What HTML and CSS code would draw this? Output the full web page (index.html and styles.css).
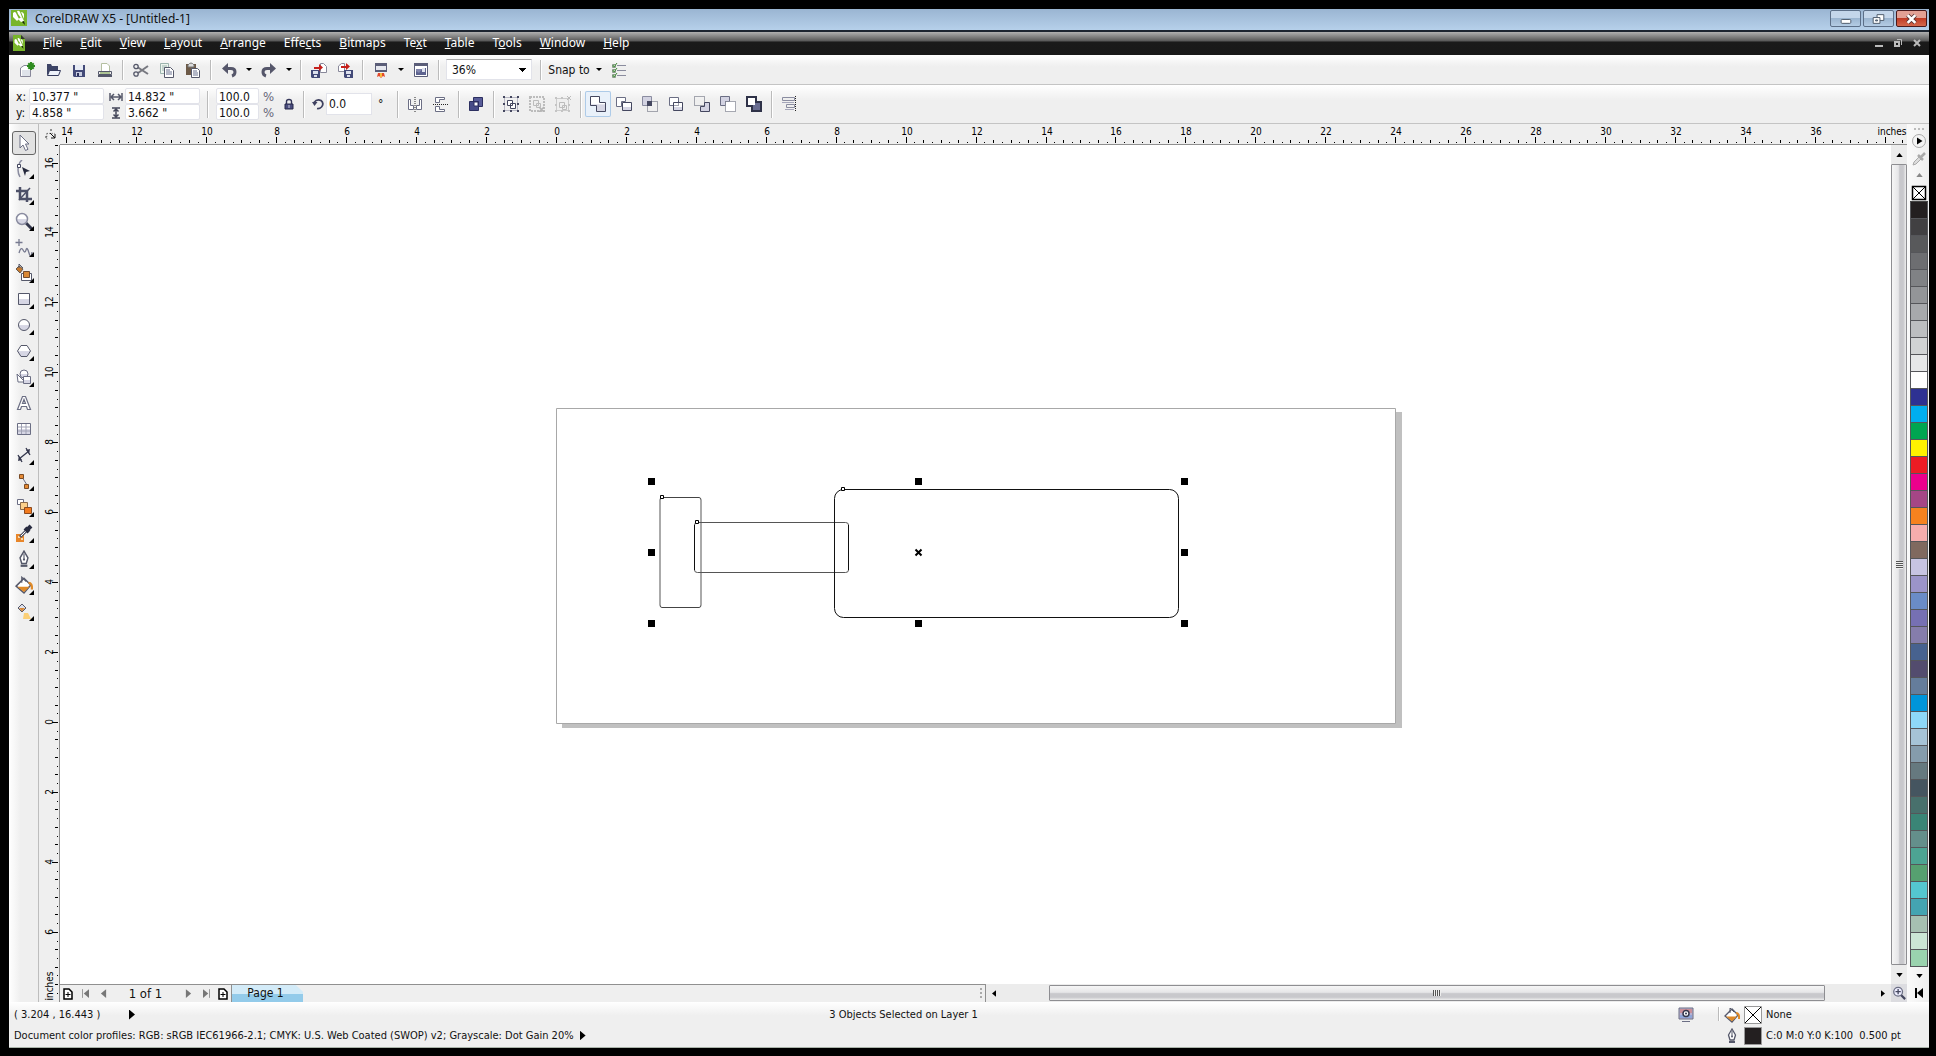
FILE: index.html
```html
<!DOCTYPE html>
<html lang="en">
<head>
<meta charset="utf-8">
<title>CorelDRAW X5 - [Untitled-1]</title>
<link rel="stylesheet" href="styles.css">
</head>
<body>
<svg class="defs" aria-hidden="true">
  <defs>
    <linearGradient id="glass" x1="0" y1="0" x2="0" y2="1"><stop offset=".5" stop-color="#fff"/><stop offset=".55" stop-color="#d6d6e4"/></linearGradient>
    <symbol id="i-bucket" viewBox="0 0 16 16"><path d="M1 9 8 2l6 6-6 7z" fill="#fff" stroke="#55586a" stroke-width="1.3"/><path d="M2 9.500h11L8 14.300z" fill="#e08a28"/><path d="M6 6V1l4 4" fill="none" stroke="#55586a"/><path d="M12 6q3.500 0 3 6" fill="none" stroke="#e08a28" stroke-width="2"/></symbol>
    <symbol id="i-nib" viewBox="0 0 16 16"><path d="M8 1 4.500 7l1.500 5h4l1.500-5z" fill="#fff" stroke="#55586a" stroke-width="1.300"/><path d="M8 3v5" stroke="#55586a"/><circle cx="8" cy="8.500" r="1" fill="#55586a"/><path d="M5 13h6v2H5z" fill="#55586a"/></symbol>
    <symbol id="i-logo" viewBox="0 0 16 16"><path d="M2 3q2-2 3 0l3 6-2 2-4-4zM6 1q2-1 3 1l2 5-1 1-3-4zM10 2q2 0 3 2v5z" fill="#fff"/><path d="M7 9l4-2 2 4-3 1z" fill="#fff"/><path d="M11 12l2-1 1 4z" fill="#16210c"/></symbol>
  </defs>
</svg>
<div class="window">
  <header class="titlebar">
    <svg class="logo" viewBox="0 0 16 16"><rect width="16" height="16" fill="#78b52b"/><use href="#i-logo"/></svg>
    <h1>CorelDRAW X5 - [Untitled-1]</h1>
    <div class="winbtns">
      <button aria-label="Minimize"><svg viewBox="0 0 30 16"><rect x="10.500" y="8.500" width="10" height="4" rx="1" fill="#fff" stroke="#4d5a6a"/></svg></button>
      <button aria-label="Restore"><svg viewBox="0 0 30 16"><path d="M13.500 3.500h7v6h-7z" fill="#fff" stroke="#4d5a6a"/><path d="M9.500 6.500h7v6h-7z" fill="#fff" stroke="#4d5a6a"/><path d="M12 9h2v1h-2z" fill="#8ba4c0" stroke="#4d5a6a"/></svg></button>
      <button class="close" aria-label="Close"><svg viewBox="0 0 30 16"><path d="m11 4 8 8m0-8-8 8" stroke="#533" stroke-width="4.400"/><path d="m11 4 8 8m0-8-8 8" stroke="#fff" stroke-width="2.800"/></svg></button>
    </div>
  </header>
  <nav class="menubar">
    <svg class="doclogo" viewBox="0 0 12 16"><path d="M0 0h8l4 4v12H0z" fill="#78b52b"/><path d="M8 0v4h4z" fill="#333"/><svg x="0" y="2" width="12" height="13"><use href="#i-logo"/></svg></svg>
    <a href="#file"><u>F</u>ile</a><a href="#edit"><u>E</u>dit</a><a href="#view"><u>V</u>iew</a><a href="#layout"><u>L</u>ayout</a><a href="#arrange"><u>A</u>rrange</a><a href="#effects">Effe<u>c</u>ts</a><a href="#bitmaps"><u>B</u>itmaps</a><a href="#text">Te<u>x</u>t</a><a href="#table"><u>T</u>able</a><a href="#tools">T<u>o</u>ols</a><a href="#window"><u>W</u>indow</a><a href="#help"><u>H</u>elp</a>
    <div class="docbtns">
      <button aria-label="Minimize document"><svg viewBox="0 0 8 8"><path d="M0 6h8v2H0z" fill="#bbb"/></svg></button>
      <button aria-label="Restore document"><svg viewBox="0 0 8 8"><path d="M1 3h4v4H1z" fill="none" stroke="#bbb" stroke-width="2"/><path d="M3 .5h4.500V6" fill="none" stroke="#bbb"/></svg></button>
      <button aria-label="Close document"><svg viewBox="0 0 8 8"><path d="m1 1 6 6m0-6L1 7" stroke="#bbb" stroke-width="2"/></svg></button>
    </div>
  </nav>

  <div class="toolbar standard">
    <button class="tb" aria-label="New"><svg viewBox="0 0 16 16"><path d="M1.500 14.500V6L5 3.500h6.500v11z" fill="#fff" stroke="#88889a"/><path d="M3 8h8v6H3z" fill="#dfe3ea"/><path d="M12 0v8M8 4h8M9.300 1.300l5.400 5.400m0-5.400L9.300 6.700" stroke="#2e8b1f" stroke-width="2"/></svg></button>
    <button class="tb" aria-label="Open"><svg viewBox="0 0 16 16"><path d="M2 13V2h4l1 2h6v4" fill="#3d4466"/><path d="M4.500 8.500h11l-2 5h-11z" fill="#eef2fa" stroke="#343a5c"/></svg></button>
    <button class="tb" aria-label="Save"><svg viewBox="0 0 16 16"><path d="M2 3h12v12H3l-1-1z" fill="#434a78"/><path d="M4 3h8v5H4z" fill="#e8ecf5"/><path d="M5 10h6v4H5z" fill="#c8cde0"/><path d="M6 11h2v3H6z" fill="#2c315a"/></svg></button>
    <button class="tb" aria-label="Print"><svg viewBox="0 0 16 16"><path d="M4.500 9V1.500H10L12.500 4v5" fill="#fff" stroke="#b4bfa0"/><path d="M1.500 9.500h13v3h-13z" fill="#eee" stroke="#55586a"/><path d="M1 14h14" stroke="#55586a" stroke-width="2"/><path d="M3 11h10" stroke="#6c9a3b"/></svg></button>
    <i class="sep"></i>
    <button class="tb" aria-label="Cut"><svg viewBox="0 0 16 16"><path d="M5 5.500 15 12M5 11l10-7" stroke="#777880" stroke-width="2"/><circle cx="3" cy="4.500" r="2.200" fill="none" stroke="#55586a" stroke-width="1.300"/><circle cx="3" cy="12" r="2.200" fill="none" stroke="#55586a" stroke-width="1.300"/></svg></button>
    <button class="tb" aria-label="Copy"><svg viewBox="0 0 16 16"><path d="M1.500 1.500h8v10h-8z" fill="#edf5ee" stroke="#9cb4ae"/><path d="M3 4h5M3 6h5M3 8h5" stroke="#9cb4ae"/><path d="M5.500 5.500h6l3 3v7h-9z" fill="#fff" stroke="#55586a"/><path d="M7 8h4M7 10h6M7 12h6" stroke="#6b7290"/></svg></button>
    <button class="tb" aria-label="Paste"><svg viewBox="0 0 16 16"><path d="M1 2h10v11H1z" fill="#6d5a48"/><path d="M3 3q3-4 6 0v2H3z" fill="#ddd" stroke="#777"/><path d="M6.500 6.500h6l2 2v7h-8z" fill="#fff" stroke="#55586a"/><path d="M8 9h4M8 11h5M8 13h5" stroke="#6b7290"/></svg></button>
    <i class="sep"></i>
    <button class="tb" aria-label="Undo"><svg viewBox="0 0 16 16"><path d="M1 6.500 7 1v11z" fill="#55566a"/><path d="M6 6.500h4q4 0 4 3.500 0 3-3 4" fill="none" stroke="#55566a" stroke-width="3"/></svg></button>
    <button class="dd" aria-label="Undo list"></button>
    <button class="tb" aria-label="Redo"><svg viewBox="0 0 16 16"><path d="M15 6.500 9 1v11z" fill="#55566a"/><path d="M10 6.500H6q-4 0-4 3.500 0 3 3 4" fill="none" stroke="#55566a" stroke-width="3"/></svg></button>
    <button class="dd" aria-label="Redo list"></button>
    <i class="sep"></i>
    <button class="tb" aria-label="Import"><svg viewBox="0 0 16 16"><path d="M9.500 9.500v-8h3l3 3v6h-6z" fill="#fff" stroke="#88889a"/><path d="M0 8h9v8H1l-1-1z" fill="#434a78"/><path d="M2 9h5v3H2zM3 13h3v2H3z" fill="#dde1ee"/><path d="M3 5h5V2l4 3.500L8 9V7H3z" fill="#c5201c"/></svg></button>
    <button class="tb" aria-label="Export"><svg viewBox="0 0 16 16"><path d="M1.500 9.500V4l3-2.500h3v8z" fill="#fff" stroke="#88889a"/><path d="M7 8h9v8H8l-1-1z" fill="#434a78"/><path d="M9 9h5v3H9zM10 13h3v2h-3z" fill="#dde1ee"/><path d="M4 4h5V1l4 3.500L9 8V6H4z" fill="#c5201c"/></svg></button>
    <i class="sep"></i>
    <button class="tb" aria-label="Application launcher"><svg viewBox="0 0 16 16"><path d="M2 1h12v9H2z" fill="#5a5d78"/><path d="M3 4h10v4H3z" fill="#e6e8ef"/><path d="M5 11h6l1 4-2-1-2 2-2-2-2 1z" fill="#e4492a"/><path d="M7 11h2v4H7z" fill="#f8b83a"/></svg></button>
    <button class="dd" aria-label="Launcher list"></button>
    <button class="tb" aria-label="Welcome screen"><svg viewBox="0 0 16 16"><path d="M1.500 1.500h13v13h-13z" fill="#fff" stroke="#5a5d78"/><path d="M1 1h14v3H1z" fill="#5a5d78"/><path d="M3 7h6v6H3z" fill="#8286ac"/><path d="M3 13V9l3 2 4-5h3v7z" fill="#5d638f"/><path d="M9 6h3v4H9z" fill="#e0e3ee"/></svg></button>
    <i class="sep"></i>
    <select class="zoom" aria-label="Zoom level"><option>36%</option></select>
    <i class="sep"></i>
    <button class="snap">Snap to</button>
    <button class="dd" aria-label="Snap options"></button>
    <button class="tb" aria-label="Options"><svg viewBox="0 0 16 16"><path d="M6 3.500h9M6 8.500h9M6 13.500h9" stroke="#8a8c9e"/><path d="M1.500 2.500h3v3h-3zM1.500 7.500h3v3h-3zM1.500 12.500h3v3h-3z" fill="#fff" stroke="#889a88"/><path d="m2 3 1 2 3-4M2 8l1 2 3-4M2 13l1 2 3-4" fill="none" stroke="#3e8a35"/></svg></button>
  </div>

  <div class="toolbar property">
    <div class="fields pos">
      <label for="px">x:</label><input id="px" value='10.377 "'>
      <label for="py">y:</label><input id="py" value='4.858 "'>
    </div>
    <div class="fields size">
      <label for="sw" aria-label="Width"><svg viewBox="0 0 14 12"><path d="M1 2v8M13 2v8" stroke="#55586a" stroke-width="1.500"/><path d="M2 6h10M5 3 2 6l3 3m4-6 3 3-3 3" fill="none" stroke="#55586a" stroke-width="1.500"/></svg></label><input id="sw" value='14.832 "'>
      <label for="sh" aria-label="Height"><svg viewBox="0 0 14 12"><path d="M3 1h8M3 11h8" stroke="#44475a" stroke-width="1.500"/><path d="M7 1v10M4.500 4.500 7 2l2.500 2.500m-5 3L7 10l2.500-2.500" fill="none" stroke="#44475a" stroke-width="1.500"/></svg></label><input id="sh" value='3.662 "'>
    </div>
    <i class="sep"></i>
    <div class="fields scale">
      <input id="sx" aria-label="Horizontal scale" value="100.0"><label for="sx">%</label>
      <input id="sy" aria-label="Vertical scale" value="100.0"><label for="sy">%</label>
    </div>
    <button class="tb lock" aria-label="Lock ratio"><svg viewBox="0 0 16 16"><path d="M5.500 8V5.500q0-2 2.500-2t2.500 2V8" fill="none" stroke="#34365a" stroke-width="1.400"/><path d="M4 8h8v5H4z" fill="#4a4d7e" stroke="#26284a"/><path d="M7.500 9h1v3h-1z" fill="#ccd"/></svg></button>
    <i class="sep"></i>
    <label class="rot" for="rot" aria-label="Rotation"><svg viewBox="0 0 12 12"><path d="M2 4.500q3-4 7-2 3.500 3 .5 6.500-2 2-4.500 1.500" fill="none" stroke="#3f4160" stroke-width="1.700"/><path d="M0 4h5.500L2.500 8z" fill="#3f4160"/></svg></label><input class="angle" id="rot" value="0.0"><span class="deg">°</span>
    <i class="sep"></i>
    <button class="tb" aria-label="Mirror horizontally"><svg viewBox="0 0 16 16"><path d="M1.500 3.500h2v6h3v4h-5zM14.500 3.500h-2v6h-3v4h5z" fill="#fff" stroke="#6b6e84"/><path d="M8 1v15" stroke="#222" stroke-dasharray="1 1"/></svg></button>
    <button class="tb" aria-label="Mirror vertically"><svg viewBox="0 0 16 16"><path d="M2.500 1.500h9v2h-5v3h-4zM2.500 15.500h9v-2h-5v-3h-4z" fill="#fff" stroke="#6b6e84"/><path d="M0 8.500h16" stroke="#222" stroke-dasharray="1 1"/></svg></button>
    <i class="sep"></i>
    <button class="tb" aria-label="To front"><svg viewBox="0 0 16 16"><path d="M5.500 1.500h9v9h-9z" fill="#585c98" stroke="#2c2f60"/><path d="M1.500 5.500h9v9h-9z" fill="#484c88" stroke="#2c2f60"/><path d="M6 6h4v4H6z" fill="#fff" stroke="#2c2f60"/></svg></button>
    <i class="sep"></i>
    <button class="tb" aria-label="Group"><svg viewBox="0 0 16 16"><path d="M1.500 1.500h13v13h-13z" fill="none" stroke="#b8b8c4"/><path d="M0 0h2v2H0zM7 0h2v2H7zM14 0h2v2h-2zM0 7h2v2H0zM14 7h2v2h-2zM0 14h2v2H0zM7 14h2v2H7zM14 14h2v2h-2z" fill="#44475f"/><path d="M4.500 4.500h5v5h-5zM7.500 7.500h5v5h-5z" fill="#fff" stroke="#44475f"/></svg></button>
    <button class="tb" aria-label="Ungroup" disabled><svg viewBox="0 0 16 16"><path d="M1 1h14v14H1z" fill="none" stroke="#bcbcbc" stroke-width="2" stroke-dasharray="2 1"/><path d="M4.500 4.500h5v5h-5zM7.500 7.500h4v4h-4z" fill="#eee" stroke="#bcbcbc"/><path d="m10 11 5 5m0-5-5 5" stroke="#b4b4b4" stroke-width="1.500"/></svg></button>
    <button class="tb" aria-label="Ungroup all" disabled><svg viewBox="0 0 16 16"><path d="M1.500 2.500h12v12h-12z" fill="none" stroke="#ccc"/><path d="M0 1h2v2H0zM0 14h2v2H0zM13 14h2v2h-2zM6 1h2v2H6zM0 8h2v2H0zM13 8h2v2h-2zM6 14h2v2H6z" fill="#c4c4c4"/><path d="M4.500 6.500h5v5h-5zM7.500 9.500h4v4h-4z" fill="#eee" stroke="#bcbcbc"/><path d="m12 0 4 4m0-4-4 4" stroke="#bbb"/></svg></button>
    <i class="sep"></i>
    <button class="tb on" aria-label="Weld"><svg viewBox="0 0 16 16"><path d="M.5.5h9v6h6v9h-9v-6h-6z" fill="url(#glass)" stroke="#44475f"/></svg></button>
    <button class="tb" aria-label="Trim"><svg viewBox="0 0 16 16"><path d="M.5 1.500h9v4h-4v5h-5z" fill="#fff" stroke="#6b6e84"/><path d="M6.500 6.500h9v8h-9z" fill="url(#glass)" stroke="#44475f"/></svg></button>
    <button class="tb" aria-label="Intersect"><svg viewBox="0 0 16 16"><path d="M.5.500h9v9h-9z" fill="#d3d3e2" stroke="#8a8ca0"/><path d="M5.500 5.500h10v10h-10z" fill="none" stroke="#55586a" stroke-dasharray="1 1"/><path d="M5 5h5v5H5z" fill="#44475f"/></svg></button>
    <button class="tb" aria-label="Simplify"><svg viewBox="0 0 16 16"><path d="M1.500 1.500h9v8h-9z" fill="#fff" stroke="#6b6e84"/><path d="M5.500 6.500h9v8h-9z" fill="url(#glass)" stroke="#44475f"/><path d="M5.500 9.500h5v-4" fill="none" stroke="#44475f" stroke-dasharray="1 1"/></svg></button>
    <button class="tb" aria-label="Front minus back"><svg viewBox="0 0 16 16"><path d="M.5.500h10v9H.5z" fill="none" stroke="#55586a" stroke-dasharray="1 1"/><path d="M10.500 6.500h5v9h-9v-5h4z" fill="#d3d3e2" stroke="#44475f"/></svg></button>
    <button class="tb" aria-label="Back minus front"><svg viewBox="0 0 16 16"><path d="M.5.500h9v5h-4v4h-5z" fill="#d3d3e2" stroke="#6b6e84"/><path d="M5.500 5.500h10v10h-10z" fill="#fff" stroke="#55586a" stroke-dasharray="1 1"/></svg></button>
    <button class="tb" aria-label="Boundary"><svg viewBox="0 0 16 16"><path d="M1 1h9v5h5v9H6v-5H1z" fill="#686c90" stroke="#2f3248" stroke-width="2"/><path d="M2 2h7v7H2z" fill="#fff"/></svg></button>
    <i class="sep"></i>
    <button class="tb" aria-label="Align and distribute"><svg viewBox="0 0 16 16"><path d="M1.500 1.500h12v3h-12zM5.500 8.500h8v3h-8z" fill="#eee" stroke="#8a8ca0"/><path d="M1 6.500h12M4 13.500h9" stroke="#a5a6ba"/><path d="M14.500 0v16" stroke="#222" stroke-dasharray="1 1"/></svg></button>
  </div>

  <main class="work">
    <div class="toolbox">
      <button class="on" aria-label="Pick"><svg viewBox="0 0 18 18"><path d="M5 1v13l3-3 2.500 5.500 2.500-1.200-2.500-5.300H14z" fill="#fff" stroke="#6b6e84"/></svg></button>
      <button class="fly" aria-label="Shape"><svg viewBox="0 0 18 18"><path d="M5 2q-4 8 0 15M5 2 7 0" fill="none" stroke="#8a8ca0" stroke-width="1.500"/><path d="M2.500 4.500h3v3h-3z" fill="#fff" stroke="#44475f"/><path d="m7 7 8 4-4 1-1 4z" fill="#25283c"/></svg></button>
      <button class="fly" aria-label="Crop"><svg viewBox="0 0 18 18"><path d="M5 1v12h12M1 5h11v11" fill="none" stroke="#4d5068" stroke-width="2.500"/><path d="M4 14 15 2" stroke="#4d5068" stroke-width="1.500"/></svg></button>
      <button class="fly" aria-label="Zoom"><svg viewBox="0 0 18 18"><path d="m11 11 6 6" stroke="#33364c" stroke-width="3"/><circle cx="7" cy="7" r="5.500" fill="url(#glass)" stroke="#8a8ca0" stroke-width="1.500"/></svg></button>
      <button class="fly" aria-label="Freehand"><svg viewBox="0 0 18 18"><path d="M4 1v7M.5 4.500h7M4 15q2-7 4-3t3 0 3 3 3-1" fill="none" stroke="#777a90" stroke-width="1.300"/></svg></button>
      <button class="fly" aria-label="Smart fill"><svg viewBox="0 0 18 18"><path d="m1 5 3-3 4 3-3 4z" fill="#c77a2e" stroke="#66594e"/><path d="M4 4V0l4 4" fill="none" stroke="#55586a"/><path d="M6.500 9.500h10v7h-10z" fill="#fff" stroke="#55586a"/><path d="M8.500 7.500h6v6h-6z" fill="#d98835" stroke="#704b30"/></svg></button>
      <button class="fly" aria-label="Rectangle"><svg viewBox="0 0 18 18"><path d="M3.500 3.500h11v11h-11z" fill="url(#glass)" stroke="#55586a"/></svg></button>
      <button class="fly" aria-label="Ellipse"><svg viewBox="0 0 18 18"><circle cx="9" cy="9" r="5.500" fill="url(#glass)" stroke="#55586a"/></svg></button>
      <button class="fly" aria-label="Polygon"><svg viewBox="0 0 18 18"><path d="M2.500 9 6 3.500h6L15.500 9 12 14.500H6z" fill="url(#glass)" stroke="#55586a"/></svg></button>
      <button class="fly" aria-label="Basic shapes"><svg viewBox="0 0 18 18"><path d="m2 6 8 8H3z" fill="#fff" stroke="#6b6e84"/><circle cx="9" cy="6" r="4" fill="url(#glass)" stroke="#6b6e84"/><path d="M8.500 8.500h7v7h-7z" fill="url(#glass)" stroke="#6b6e84"/></svg></button>
      <button aria-label="Text"><svg viewBox="0 0 18 18"><path d="m2.500 15.500 5-13h3l5 13h-3l-1-3h-5l-1 3zM7.500 9.500h3L9 5.500z" fill="#fff" stroke="#6b6e84" stroke-width="1.200"/></svg></button>
      <button aria-label="Table"><svg viewBox="0 0 18 18"><path d="M2.500 3.500h13v11h-13z" fill="url(#glass)" stroke="#6b6e84"/><path d="M3 7h12M3 11h12M6.500 4v10M11 4v10" stroke="#a0a2b4"/></svg></button>
      <button class="fly" aria-label="Dimension"><svg viewBox="0 0 18 18"><path d="M4 13 14 5M3 9l4 7M11 2l4 7" stroke="#33364c" stroke-width="1.300"/><path d="m3 15 1-5 3 4zM15 3l-1 5-3-4z" fill="#33364c"/></svg></button>
      <button class="fly" aria-label="Connector"><svg viewBox="0 0 18 18"><path d="m7 5 5 8" stroke="#6b6e84"/><path d="M4.500 2.500h4v4h-4zM9.500 12.500h4v4h-4z" fill="#e58a35" stroke="#7b4c26"/></svg></button>
      <button class="fly" aria-label="Blend"><svg viewBox="0 0 18 18"><path d="M2.500 1.500h6v5h-6z" fill="#fff" stroke="#6b6e84"/><path d="M5.500 4.500h7v7h-7z" fill="#fbd08a" stroke="#8a6a4a"/><path d="M9.500 9.500h7v6h-7z" fill="#f27a1c" stroke="#8a4a20"/></svg></button>
      <button class="fly" aria-label="Eyedropper"><svg viewBox="0 0 18 18"><path d="M1 10h8v8H1z" fill="#e8862a"/><path d="M3 12h2v2H3zM6 14h2v2H6z" fill="#fcd9a8"/><path d="m5 13 7-7" stroke="#55586a" stroke-width="3"/><path d="m6 12 5-5" stroke="#fff"/><path d="m10 4 4 4M12 6l4-4" stroke="#282b40" stroke-width="4"/></svg></button>
      <button class="fly" aria-label="Outline pen"><svg viewBox="0 0 16 16"><use href="#i-nib"/></svg></button>
      <button class="fly" aria-label="Fill"><svg viewBox="0 0 16 16"><use href="#i-bucket"/></svg></button>
      <button class="fly" aria-label="Interactive fill"><svg viewBox="0 0 18 18"><path d="m3 6 4-4 4 4-4 4z" fill="#dfe1ea" stroke="#55586a"/><path d="M4 6h6L7 9.500z" fill="#d98835"/><path d="m9 11h4l3 6H8z" fill="#fbcf77"/></svg></button>
    </div>
    <div class="corner"><svg viewBox="0 0 21 21"><path d="M8 9v12M8 9h13" stroke="#222" stroke-dasharray="2 2" transform="translate(3 4) scale(.6)"/><path d="M11 9l5 5m0-4v4h-4" stroke="#111" fill="none"/><path d="M12 5v2M6 13h2" stroke="#333"/></svg></div>
    <svg class="ruler-h" id="rulerH"></svg>
    <svg class="ruler-v" id="rulerV"></svg>
    <div class="canvas">
      <svg width="1831" height="839" viewBox="60 145 1831 839">
        <path d="M562 412h840v316H562z" fill="#c0c0c0"/>
        <path d="M556.500 408.500h839v315h-839z" fill="#fff" stroke="#a8a8a8"/>
        <g fill="none" stroke="#111">
          <path d="M660 500v105M701 500v105" stroke="#aaa" stroke-width="2"/>
          <path d="M660 500q0-2.500 2-2.500h37q2 0 2 2.500M660 605q0 2.500 2 2.500h37q2 0 2-2.500" stroke="#444"/>
          <path d="M694.500 525v45M848.500 525v45"/>
          <path d="M694.500 525q0-2.500 3-2.500h148q3 0 3 2.500M694.500 570q0 2.500 3 2.500h148q3 0 3-2.500" stroke="#555"/>
          <rect x="834.500" y="489.500" width="344" height="128" rx="9"/>
        </g>
        <path d="M660.500 495.500h3v3h-3zM695.500 520.500h3v3h-3zM841.500 487.500h3v3h-3z" fill="#fff" stroke="#000"/>
        <path d="M648 478h7v7h-7zM915 478h7v7h-7zM1181 478h7v7h-7zM648 549h7v7h-7zM1181 549h7v7h-7zM648 620h7v7h-7zM915 620h7v7h-7zM1181 620h7v7h-7z"/>
        <path d="m915.500 549.500 6 6m0-6-6 6" stroke="#000" stroke-width="2"/>
      </svg>
    </div>
    <div class="vscroll">
      <button aria-label="Scroll up"><svg viewBox="0 0 8 5"><path d="M4 0l4 5H0z"/></svg></button>
      <div class="thumb"><i></i></div>
      <button aria-label="Scroll down"><svg viewBox="0 0 8 5"><path d="M4 5l4-5H0z"/></svg></button>
    </div>
    <div class="bottom">
      <div class="pages">
        <button class="add" aria-label="Add page before"><svg viewBox="0 0 10 12"><path d="M1 1h5l3 3v7H1z" fill="#fff" stroke="#000" stroke-width="1.500"/><path d="M5 4v5M2.500 6.500h5" stroke="#000"/></svg></button>
        <button aria-label="First page"><svg viewBox="0 0 8 10"><path d="M.5 0v10" stroke="#888"/><path d="M8 0v10L2 5z" fill="#777"/></svg></button>
        <button aria-label="Previous page"><svg viewBox="0 0 8 10"><path d="M7 0v10L1 5z" fill="#777"/></svg></button>
        <span class="count">1 of 1</span>
        <button aria-label="Next page"><svg viewBox="0 0 8 10"><path d="M1 0v10l6-5z" fill="#777"/></svg></button>
        <button aria-label="Last page"><svg viewBox="0 0 8 10"><path d="M7.500 0v10" stroke="#888"/><path d="M0 0v10l6-5z" fill="#777"/></svg></button>
        <button class="add" aria-label="Add page after"><svg viewBox="0 0 10 12"><path d="M1 1h5l3 3v7H1z" fill="#fff" stroke="#000" stroke-width="1.500"/><path d="M5 4v5M2.500 6.500h5" stroke="#000"/></svg></button>
        <a class="tab" href="#page1">Page 1</a>
        <i class="grip"></i>
      </div>
      <div class="hscroll">
        <button aria-label="Scroll left"><svg viewBox="0 0 5 8"><path d="M5 0v8L0 4z"/></svg></button>
        <div class="track"><div class="thumb"><i></i></div></div>
        <button aria-label="Scroll right"><svg viewBox="0 0 5 8"><path d="M0 0v8l5-4z"/></svg></button>
      </div>
    </div>
    <button class="navigator" aria-label="Navigator"><svg viewBox="0 0 16 16"><path d="m10 10 5 5" stroke="#44475f" stroke-width="2.500"/><circle cx="7" cy="6.500" r="5" fill="#eef" stroke="#6b6e84" stroke-width="1.500"/><path d="M7 3.500v6M4 6.500h6" stroke="#44475f" stroke-width="1.500"/></svg></button>
    <aside class="palette">
      <i class="dots"></i>
      <button class="menu" aria-label="Palette menu"><svg viewBox="0 0 16 16"><circle cx="8" cy="8" r="6.500" fill="#f4f4f4" stroke="#aaa"/><path d="M6 4.500v7L11.500 8z"/></svg></button>
      <button class="drop" aria-label="Pick color"><svg viewBox="0 0 14 14"><path d="m1 13 1-3 6-6 2 2-6 6z" fill="#ddd" stroke="#aaa"/><path d="m6 3 5 5M9 5l4-4" stroke="#aaa" stroke-width="2.500"/></svg></button>
      <button class="up" aria-label="Palette up"><svg viewBox="0 0 8 5"><path d="M4 0l4 5H0z" fill="#888"/></svg></button>
      <button class="none" aria-label="No color"><svg viewBox="0 0 16 16"><path d="M1.500 1.500h13v13h-13z" fill="#fff" stroke="#000" stroke-width="1.500"/><path d="m2 2 12 12m0-12L2 14" stroke="#000"/></svg></button>
      <div class="swatches" id="swatches"></div>
      <button class="down" aria-label="Palette down"><svg viewBox="0 0 8 5"><path d="M4 5l4-5H0z"/></svg></button>
      <button class="expand" aria-label="Expand palette"><svg viewBox="0 0 8 10"><path d="M1 0v10" stroke="#000" stroke-width="2"/><path d="M8 0v10L2 5z"/></svg></button>
    </aside>
  </main>

  <footer class="status">
    <div class="left">
      <p class="coords"><span>( 3.204 , 16.443 )</span><button class="play" aria-label="Status options"></button></p>
      <p><span>Document color profiles: RGB: sRGB IEC61966-2.1; CMYK: U.S. Web Coated (SWOP) v2; Grayscale: Dot Gain 20%</span><button class="play" aria-label="Profile options"></button></p>
    </div>
    <p class="middle">3 Objects Selected on Layer 1</p>
    <div class="right">
      <svg class="proof" viewBox="0 0 16 16"><path d="M1 1h14v11H1z" fill="#b8b0d0" stroke="#6b6e84"/><path d="M2 2h12v4H2z" fill="#c98f9a"/><path d="M2 8h12v3H2z" fill="#8fa5d8"/><circle cx="8" cy="6.500" r="3" fill="#fff" stroke="#33364c" stroke-width="1.500"/><circle cx="8" cy="6.500" r="1" fill="#33364c"/><path d="M4 14.500h8" stroke="#6b6e84"/></svg>
      <i class="sep"></i>
      <div class="ink"><svg viewBox="0 0 16 16"><use href="#i-bucket"/></svg><svg class="chip" viewBox="0 0 18 18"><path d="M.5.500h17v17H.5z" fill="#fff" stroke="#999"/><path d="m1 1 16 16M17 1 1 17" stroke="#000"/></svg><span>None</span>
      <svg viewBox="0 0 16 16"><use href="#i-nib"/></svg><svg class="chip" viewBox="0 0 18 18"><path d="M.5.500h17v17H.5z" fill="#231f20" stroke="#999"/></svg><span>C:0 M:0 Y:0 K:100&nbsp; 0.500 pt</span></div>
    </div>
  </footer>
</div>
<script src="app.js"></script>
</body>
</html>
```
FILE: styles.css
```css
* { box-sizing: border-box; }
body { margin: 0; background: #000; color: #111; font: 12px/16px "DejaVu Sans Condensed", "Noto Sans", sans-serif; }
button { padding: 0; border: 0; background: none; font: inherit; color: inherit; display: flex; align-items: center; justify-content: center; }
input, select { font: inherit; color: inherit; border: 1px solid #e2e3ea; background: #fff; }
p, h1 { margin: 0; font-size: inherit; font-weight: normal; }
svg { display: block; }
.defs { position: absolute; width: 0; height: 0; }
.window { height: 100vh; border: solid #000; border-width: 9px 7px 8px 9px; background: #efefef; display: flex; flex-direction: column; }

.titlebar { height: 23px; flex: none; display: flex; align-items: flex-start; padding: 1px 2px 0; background: linear-gradient(#9ab5d2, #b6d0ea); border-bottom: 2px solid #1c2430; }
.logo { width: 16px; height: 16px; }
.titlebar h1 { flex: 1; margin-left: 8px; font: 12px/18px "Noto Sans", sans-serif; }
.winbtns { display: flex; gap: 2px; }
.winbtns button { width: 31px; height: 17px; border: 1px solid #5c6f88; border-radius: 2px; background: linear-gradient(#c4d6ea 50%, #9bb5d0 50%, #b4cce4); }
.winbtns svg { width: 30px; height: 16px; }
.winbtns .close { border-color: #4a1a1c; background: linear-gradient(#e2a094 50%, #c03c26 50%, #d4684c); }

.menubar { height: 23px; flex: none; display: flex; align-items: center; padding: 0 8px 2px 4px; background: linear-gradient(#b0b0b0, #5a5a5a 38%, #1a1a1a 44%, #181818); color: #fff; }
.doclogo { width: 12px; height: 16px; margin-right: 9px; }
.menubar a { color: inherit; text-decoration: none; padding: 0 9px; font: 12px/18px "Noto Sans", sans-serif; }
.docbtns { display: flex; gap: 11px; margin-left: auto; }
.docbtns svg { width: 8px; height: 8px; }

.toolbar { flex: none; display: flex; align-items: center; padding-left: 5px; border-bottom: 1px solid #c4c4c4; background: linear-gradient(#fff, #efefef 40%); }
.standard { height: 30px; }
.property { height: 39px; }
.tb { width: 26px; height: 26px; flex: none; border-radius: 2px; }
.tb svg { width: 16px; height: 16px; }
.tb.on { background: #e9f1fa; box-shadow: inset 0 0 0 1px #aecbe8; }
.dd { width: 14px; height: 26px; }
.dd::before { content: ""; border: solid transparent; border-width: 3px 3px 0; border-top-color: #000; }
.sep { width: 2px; height: 20px; margin: 0 4px; flex: none; background: linear-gradient(90deg, #bbb 50%, #fff 50%); }
.property .sep { height: 27px; margin-right: 3px; }
.zoom { width: 86px; height: 21px; margin: 0 4px 0 2px; padding: 0 5px; border-top-color: #aaa; appearance: none; background: conic-gradient(from 315deg at 50% 100%, #000 90deg, #fff 0) no-repeat right 5px center / 7px 4px #fff; }
.snap { width: 46px; height: 26px; }

.fields { display: grid; grid-template-rows: 16px 16px; align-items: center; }
.fields input { width: 100%; height: 16px; padding: 1px 2px 0; border-radius: 2px; }
.fields label { line-height: 16px; padding-top: 1px; }
.pos { grid-template-columns: 17px 75px; margin-left: -2px; }
.pos label { padding-left: 4px; }
.size { grid-template-columns: 21px 75px; margin-right: 3px; }
.size svg { width: 14px; height: 12px; margin: 1px 0 0 5px; }
.scale { grid-template-columns: 43px 20px; margin-left: 4px; }
.scale label { padding-left: 4px; color: #667; font-size: 13px; }
.lock { width: 20px; }
.rot { padding: 0 2px 0 4px; }
.rot svg { width: 12px; height: 12px; }
.angle { width: 46px; height: 22px; padding: 0 2px; }
.deg { width: 21px; padding-left: 6px; }

.work { flex: 1; min-height: 0; display: grid; grid-template-columns: 30px 21px minmax(0, 1fr) 16px 22px; grid-template-rows: 21px minmax(0, 1fr) 18px; }
.toolbox { grid-row: 1 / -1; display: flex; flex-direction: column; align-items: center; padding-top: 6px; border-right: 1px solid #bdbdbd; background: linear-gradient(90deg, #fff, #efefef 40%); }
.toolbox button { width: 24px; height: 26px; position: relative; }
.toolbox .on { border: 1px solid #666; border-radius: 3px; background: #e2e2e2; height: 24px; margin: 1px 0; }
.toolbox svg { width: 18px; height: 18px; }
.toolbox .fly::after { content: ""; position: absolute; right: 2px; bottom: 3px; border: solid transparent; border-width: 0 0 5px 5px; border-bottom-color: #000; }
.corner svg { width: 21px; height: 21px; }
.ruler-h { grid-column: 3 / 5; width: 100%; height: 21px; border-bottom: 1px solid #909090; }
.ruler-v { grid-column: 2; grid-row: 2 / 4; width: 21px; height: 100%; border-right: 1px solid #909090; }
.ruler-h text, .ruler-v text { font-size: 10px; text-anchor: middle; }
.canvas { grid-column: 3; grid-row: 2; background: #fff; overflow: hidden; }

.vscroll { grid-column: 4; grid-row: 2; display: flex; flex-direction: column; background: #ececec; }
.vscroll button { height: 19px; flex: none; }
.vscroll svg, .palette .up svg, .palette .down svg { width: 7px; height: 4px; }
.thumb { flex: 1; display: flex; align-items: center; justify-content: center; border: 1px solid #8e8e92; border-radius: 1px; }
.vscroll .thumb { background: linear-gradient(90deg, #f6f6f6, #e6e6e8 45%, #c8c8cc 55%, #c8c8cc 80%, #eee); }
.vscroll .thumb i { width: 7px; height: 8px; background: repeating-linear-gradient(#555 0 1px, #eee 1px 2px); }

.bottom { grid-column: 3; grid-row: 3; display: flex; }
.pages { flex: 924 1 0; min-width: 0; display: flex; align-items: center; padding-left: 3px; border-top: 1px solid #909090; border-right: 1px solid #909090; }
.pages button { width: 18px; height: 16px; }
.pages button svg { width: 7px; height: 9px; }
.pages .add { width: 10px; margin-right: 3px; }
.pages .count + button + button + .add { margin-left: 3px; }
.pages .add svg { width: 10px; height: 12px; }
.count { width: 67px; text-align: center; font-size: 13px; }
.tab { width: 72px; height: 17px; padding-right: 4px; text-align: center; text-decoration: none; color: #111; border-left: 1px solid #909090; background: linear-gradient(#d3ebf8 50%, #93cbea 50%); clip-path: polygon(0 0, 90% 0, 100% 40%, 100% 100%, 0 100%); }
.grip { width: 2px; height: 11px; margin: 0 3px 0 auto; background: repeating-linear-gradient(#aaa 0 2px, transparent 2px 4px); }
.hscroll { flex: 907 1 0; min-width: 0; display: flex; background: #ececec; padding: 1px 0; }
.hscroll button { width: 17px; flex: none; }
.hscroll svg { width: 4px; height: 7px; }
.track { flex: 1; display: flex; padding: 0 49px 0 46px; }
.track .thumb { background: linear-gradient(#f6f6f6, #e6e6e8 45%, #c8c8cc 55%, #c8c8cc 80%, #eee); }
.track i { width: 8px; height: 6px; background: repeating-linear-gradient(90deg, #555 0 1px, #eee 1px 2px); }
.navigator { grid-column: 4; grid-row: 3; background: #dcdce0; }
.navigator svg { width: 14px; height: 14px; }

.palette { grid-column: 5; grid-row: 1 / -1; display: flex; flex-direction: column; align-items: center; padding: 4px 1px 0 3px; background: linear-gradient(90deg, #fafafa, #efefef); }
.dots { width: 11px; height: 2px; background: repeating-linear-gradient(90deg, #bbb 0 2px, transparent 2px 4px); }
.menu { height: 22px; }
.menu svg { width: 16px; height: 16px; }
.drop { height: 14px; }
.drop svg { width: 14px; height: 14px; }
.up { height: 18px; }
.none { height: 17px; }
.none svg { width: 16px; height: 16px; }
.swatches { width: 18px; border-top: 1px solid #444; }
.swatches button { width: 18px; height: 17px; border: solid #55565a; border-width: 0 1px 1px; }
.down { height: 18px; }
.expand { height: 16px; }
.expand svg { width: 8px; height: 10px; }

.status { height: 46px; flex: none; display: grid; grid-template-columns: minmax(0, 49fr) minmax(0, 51fr) auto; align-items: start; padding: 2px 5px 0; background: linear-gradient(#fff, #efefef 30%); font-size: 11px; border-bottom: 1px solid #aab4aa; }
.left p { display: flex; align-items: center; height: 21px; white-space: nowrap; }
.left p span { margin-right: 6px; }
.left .coords span { width: 85px; margin-right: 30px; }
.play { width: 6px; height: 10px; background: #000; clip-path: polygon(0 0, 100% 50%, 0 100%); }
.middle { line-height: 21px; }
.right { display: flex; padding-top: 2px; }
.proof { width: 16px; height: 16px; margin: 1px 20px 0 0; }
.right .sep { height: 14px; margin: 1px 4px 0; }
.ink { display: grid; grid-template-columns: 16px 18px auto; justify-content: start; column-gap: 4px; row-gap: 3px; align-items: center; width: 200px; }
.ink svg { width: 16px; height: 16px; }
.ink .chip { width: 18px; height: 18px; }
.ink span { white-space: nowrap; }
```
FILE: app.js
```js
const NS = 'http://www.w3.org/2000/svg';
const INCH = 34.965;

function add(svg, name, attrs, text) {
  const el = document.createElementNS(NS, name);
  for (const key in attrs) el.setAttribute(key, attrs[key]);
  if (text !== undefined) el.textContent = text;
  svg.appendChild(el);
}

// One tick every quarter inch, longer on halves, longest and labelled on even inches.
function drawRuler(svg, origin, length, vertical) {
  const ticks = [];
  const first = Math.ceil(-origin / INCH * 4);
  const last = Math.floor((length - origin) / INCH * 4);
  for (let i = first; i <= last; i++) {
    const at = Math.round(origin + i * INCH / 4);
    const size = i % 8 === 0 ? 6 : i % 2 === 0 ? 3 : 1;
    ticks.push(vertical ? `M${19 - size} ${at}.5h${size}` : `M${at}.5 ${19 - size}v${size}`);
    if (i % 8 !== 0 || at < 4 || at > length - 30) continue;
    const label = Math.abs(i / 4);
    if (vertical) add(svg, 'text', { transform: `translate(14 ${at}) rotate(-90)` }, label);
    else add(svg, 'text', { x: at + 1, y: 11 }, label);
  }
  add(svg, 'path', { d: ticks.join(''), stroke: '#000' });
  if (vertical) add(svg, 'text', { transform: `translate(14 ${length - 16}) rotate(-90)` }, 'inches');
  else add(svg, 'text', { x: length - 15, y: 11 }, 'inches');
}

const h = document.getElementById('rulerH');
const v = document.getElementById('rulerV');
drawRuler(h, 496, h.clientWidth || h.getBoundingClientRect().width, false);
drawRuler(v, 577, v.clientHeight || v.getBoundingClientRect().height, true);

const colors = ['#231f20', '#414042', '#58595b', '#6d6e71', '#808285', '#939598', '#a7a9ac', '#bcbec0', '#d1d3d4', '#e6e7e8', '#ffffff',
  '#2e3192', '#00aeef', '#00a651', '#fff200', '#ed1c24', '#ec008c', '#a54686', '#f6821f', '#f6adad', '#80695f', '#c7c4e2',
  '#9b94c9', '#6a8cc7', '#7670b3', '#857dab', '#47628f', '#534c6e', '#657d9b', '#0095da', '#8ed8f8', '#a6c3d6', '#859cac',
  '#66797f', '#455560', '#48706c', '#3a8576', '#648f8b', '#4da493', '#56a070', '#54c6cf', '#44a4b1', '#a6c0b1', '#cbe6d5', '#9ad3ae'];
const box = document.getElementById('swatches');
for (const color of colors) {
  const swatch = document.createElement('button');
  swatch.setAttribute('aria-label', color);
  swatch.style.background = color;
  box.appendChild(swatch);
}
```
